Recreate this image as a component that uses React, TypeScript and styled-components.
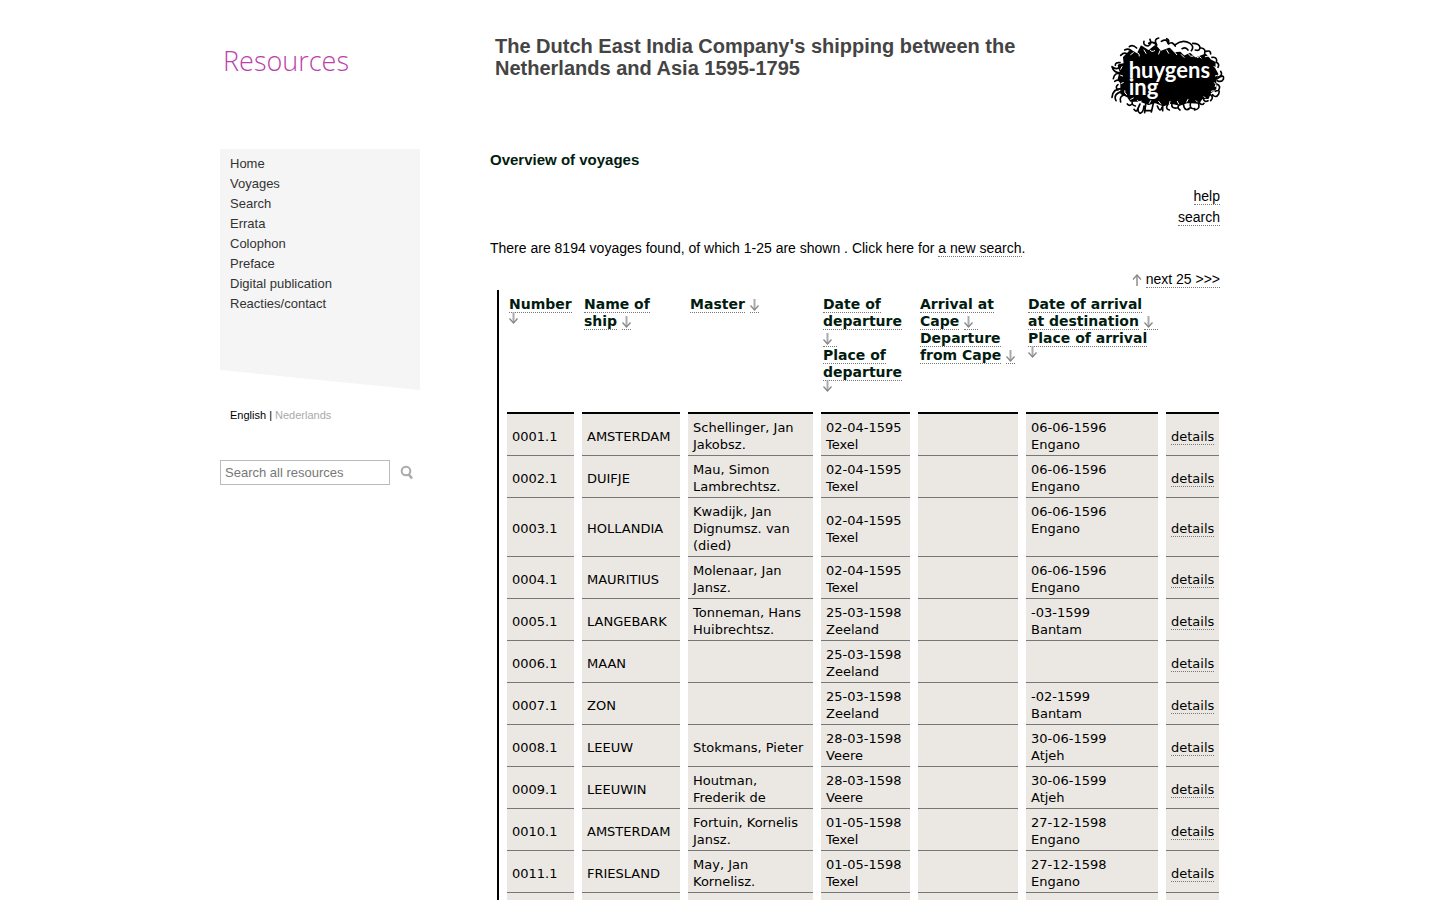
import React from 'react';
import styled, { createGlobalStyle } from 'styled-components';

const sans = '"Liberation Sans", Arial, sans-serif';
const wide = 'Verdana, "DejaVu Sans", sans-serif';

const GlobalStyle = createGlobalStyle`
  * { box-sizing: border-box; }
  body { margin: 0; background: #fff; color: #000; font: 14px/21px ${sans}; }
  a { color: inherit; text-decoration: none; }
  h1, h2, p, ul { margin: 0; padding: 0; }
`;

const Page = styled.div`
  max-width: 1000px;
  margin: 0 auto;
`;

const Clip = styled.div`
  height: 100vh;
  overflow: hidden;
`;

const Header = styled.header`
  display: grid;
  grid-template-columns: 200px 1fr auto;
  column-gap: 75px;
  height: 149px;
  padding-top: 35px;
  margin-right: -5px;
`;

const Brand = styled.a`
  padding: 8px 0 0 3px;
  font: 300 27px/36px "Open Sans", sans-serif;
  color: #bd3fab;
`;

const Title = styled.h1`
  max-width: 540px;
  font-size: 20px;
  line-height: 22px;
  color: #444;
`;

const Columns = styled.div`
  display: grid;
  grid-template-columns: 200px 1fr;
  column-gap: 70px;
`;

const Nav = styled.nav`
  height: 241px;
  padding: 5px 10px;
  background: #f5f5f5;
  clip-path: polygon(0 0, 100% 0, 100% 100%, 0 221px);
`;

const NavList = styled.ul`
  list-style: none;
  font-size: 13px;
  line-height: 20px;
  color: #333;
`;

const Languages = styled.div`
  padding: 15px 10px 0;
  font-size: 11px;
  line-height: 20px;
`;

const OtherLanguage = styled.a`
  color: #aaa;
`;

const SearchForm = styled.form`
  display: flex;
  align-items: center;
  gap: 10px;
  margin-top: 35px;
`;

const SearchInput = styled.input`
  width: 170px;
  height: 25px;
  padding: 0 4px;
  border: 1px solid #bbb;
  border-radius: 0;
  font: 13px ${sans};
  color: #777;
  &::placeholder { color: #777; opacity: 1; }
`;

const SearchButton = styled.button`
  display: flex;
  padding: 0;
  border: 0;
  background: none;
`;

const Heading = styled.h2`
  font-size: 15px;
  line-height: 21px;
  color: #021c10;
`;

const SideLinks = styled.div`
  display: flex;
  flex-direction: column;
  align-items: flex-end;
  margin-top: 16px;
`;

const LinkLine = styled.div`
  line-height: 21px;
`;

const Summary = styled.p`
  margin-top: 10px;
`;

const Pager = styled.div`
  display: flex;
  justify-content: flex-end;
  align-items: center;
  gap: 4px;
  margin-top: 10px;
`;

const DottedLink = styled.a`
  border-bottom: 1px dotted #777;
`;

const TableFrame = styled.div`
  margin: 0 -7px 0 7px;
  border-left: 2px solid #000;
`;

const Table = styled.table`
  width: 100%;
  table-layout: fixed;
  border-collapse: separate;
  border-spacing: 8px 0;
  font: 13px/17px ${wide};
`;

const HeadCell = styled.th`
  height: 122px;
  padding: 6px 0 0 2px;
  vertical-align: top;
  text-align: left;
  font-size: 14px;
  white-space: nowrap;
  color: #021c10;
`;

const Row = styled.tr`
  height: 42px;
  &:first-child td { border-top: 2px solid #000; }
`;

const Cell = styled.td<{ $top?: boolean }>`
  padding: 5px 0 2px 5px;
  border-bottom: 1px solid #777;
  background: #ebe8e3;
  vertical-align: ${(p) => (p.$top ? 'top' : 'middle')};
  white-space: pre-line;
`;

const InlineArrow = styled.svg`
  display: inline-block;
  vertical-align: -2px;
`;

const BelowArrow = styled.svg`
  display: block;
  margin-top: -1px;
  background: #fff;
`;

const ArrowShape = () => (
  <>
    <path d="M4.5 0V11" stroke="#aaa" strokeWidth="2" />
    <path d="M0.5 6.5L4.5 11L8.5 6.5" fill="none" stroke="#888" strokeWidth="1.3" />
  </>
);

const Sort = ({ trail = false }: { trail?: boolean }) => (
  <DottedLink href="#" aria-label="Sort">
    <InlineArrow width="9" height="12" viewBox="0 0 9 12"><ArrowShape /></InlineArrow>
    {trail && '\u00a0'}
  </DottedLink>
);

const SortBelow = () => (
  <a href="#" aria-label="Sort">
    <BelowArrow width="10" height="12" viewBox="0 0 10 12"><ArrowShape /></BelowArrow>
  </a>
);

const L = ({ children }: { children: React.ReactNode }) => <DottedLink href="#">{children}</DottedLink>;

const HuygensLogo = () => (
  <svg width="115" height="82" viewBox="30 15 345 246" role="img" aria-label="Huygens ING">
    <path stroke="#000" strokeWidth="6" strokeLinejoin="round" d="M72 82L92 62L112 74L124 50L146 64L166 48L182 66L208 56L222 70L240 68L252 80L270 72L286 86L316 74L330 90L344 98L343 116L352 132L346 154L346 176L330 188L324 204L306 204L296 218L262 216L240 224L214 218L190 226L166 216L146 222L120 212L92 212L84 200L64 190L64 160L56 146L62 126L56 106L74 102Z" />
    <g fill="none" stroke="#000" strokeLinecap="round" strokeWidth="5">
      <path d="M62 76q12-12 22-2M74 60q14-8 24 8M88 50q10-8 22 4M132 34q-4 12 12 14M150 28q6 14-6 20M146 40q16-8 24 6M176 24q-16 4-6 20M184 34q16-10 20 6M200 26q10 4 4 14M206 42q10-10 20 6M226 44q22-18 44-4q14 10 4 22M246 56q12-6 18 4M278 40q20 0 22 12q0 12-14 8M304 54q14 2 10 16M318 64q14-4 14 8M336 82q14-2 14 10M348 96q12 6 6 16" />
      <path d="M36 110q14 12 26 0M36 110q6 20 26 18M60 98q-14-2-14 8M40 146q4-20 20-14M44 154q12-8 20 2M54 164q-10 8 0 16M36 202q2-28 34-26M48 212q-10-20 18-28M62 216q-6-18 14-22M82 222q6 8 14 0M98 212q-6 12 8 16" />
      <path d="M362 124q8 12-8 18M352 146q22-16 18 2q-6 10-18 4M350 162q14 6 6 18M346 184q16-8 10 8q-8 14-18 2M328 192q16 8 4 20M310 206q4 12 14 6M298 218q8 10 14 2M102 238q8 12 12-4M120 222q-12 22 0 28q10-2 12-22M138 216l-4 32M134 242h18M160 220l-6 26M172 228q8 22 14 4M188 228v14M204 222q-10 14 4 18M216 220q-4 16 14 14M240 222q-12 10 0 18M250 222q4 26 20 12M272 216q-6 22 12 20M294 218q10 18-10 22" />
    </g>
    <g fill="none" stroke="#fff" strokeLinecap="round" strokeWidth="3">
      <path d="M92 74l8-6M112 68q8 2 6 10M132 60l6 10M150 60q4 8 14 2M180 62l-4 10M200 60l6 10M224 66l6 8M244 74l8 8M266 72q4 10 14 6M292 82q8-6 12 2M316 80l10-2M342 110l8 4M346 138l6-2M344 158q6 4 2 12M334 184l6-2M66 110l-4 8M62 136l6 2M64 160l6-2M74 182q-2 8 6 12M92 208l8-4M112 212q4 6 12 2M148 220l4-8M182 222l-6-8M208 222l2-8M236 222l-4-8M260 216l4-8M288 212l4 4M312 200l4 4" />
    </g>
    <text x="86" y="143" fill="#fff" fontFamily="Lato, sans-serif" fontWeight="700" fontSize="66">huygens</text>
    <text x="86" y="196" fill="#fff" fontFamily="Lato, sans-serif" fontWeight="700" fontSize="66">ing</text>
  </svg>
);

const columns = [67, 98, 125, 89, 100, 132, 53];

const voyages = [
  ['0001.1', 'AMSTERDAM', 'Schellinger, Jan\nJakobsz.', '02-04-1595\nTexel', '06-06-1596\nEngano'],
  ['0002.1', 'DUIFJE', 'Mau, Simon\nLambrechtsz.', '02-04-1595\nTexel', '06-06-1596\nEngano'],
  ['0003.1', 'HOLLANDIA', 'Kwadijk, Jan\nDignumsz. van\n(died)', '02-04-1595\nTexel', '06-06-1596\nEngano'],
  ['0004.1', 'MAURITIUS', 'Molenaar, Jan\nJansz.', '02-04-1595\nTexel', '06-06-1596\nEngano'],
  ['0005.1', 'LANGEBARK', 'Tonneman, Hans\nHuibrechtsz.', '25-03-1598\nZeeland', '-03-1599\nBantam'],
  ['0006.1', 'MAAN', '', '25-03-1598\nZeeland', ''],
  ['0007.1', 'ZON', '', '25-03-1598\nZeeland', '-02-1599\nBantam'],
  ['0008.1', 'LEEUW', 'Stokmans, Pieter', '28-03-1598\nVeere', '30-06-1599\nAtjeh'],
  ['0009.1', 'LEEUWIN', 'Houtman,\nFrederik de', '28-03-1598\nVeere', '30-06-1599\nAtjeh'],
  ['0010.1', 'AMSTERDAM', 'Fortuin, Kornelis\nJansz.', '01-05-1598\nTexel', '27-12-1598\nEngano'],
  ['0011.1', 'FRIESLAND', 'May, Jan\nKornelisz.', '01-05-1598\nTexel', '27-12-1598\nEngano'],
  ['', '', '', '', ''],
];

const navItems = ['Home', 'Voyages', 'Search', 'Errata', 'Colophon', 'Preface', 'Digital publication', 'Reacties/contact'];

export default function App() {
  return (
    <Clip>
      <GlobalStyle />
      <Page>
        <Header>
          <Brand href="#">Resources</Brand>
          <Title>The Dutch East India Company's shipping between the Netherlands and Asia 1595-1795</Title>
          <HuygensLogo />
        </Header>
        <Columns>
          <aside>
            <Nav>
              <NavList>
                {navItems.map((item) => <li key={item}><a href="#">{item}</a></li>)}
              </NavList>
            </Nav>
            <Languages>
              <a href="#">English</a> | <OtherLanguage href="#">Nederlands</OtherLanguage>
            </Languages>
            <SearchForm>
              <SearchInput type="text" aria-label="Search all resources" placeholder="Search all resources" />
              <SearchButton type="button" aria-label="Search">
                <svg width="14" height="15" viewBox="0 0 14 15" fill="none" stroke="#aaa">
                  <circle cx="6" cy="6" r="4.3" strokeWidth="2" />
                  <path d="M8.8 9.5L12 13.5" strokeWidth="2.6" />
                </svg>
              </SearchButton>
            </SearchForm>
          </aside>
          <main>
            <Heading>Overview of voyages</Heading>
            <SideLinks>
              <LinkLine><L>help</L></LinkLine>
              <LinkLine><L>search</L></LinkLine>
            </SideLinks>
            <Summary>
              There are 8194 voyages found, of which 1-25 are shown . Click here for <L>a new search</L>.
            </Summary>
            <Pager>
              <svg width="10" height="12" viewBox="0 0 10 12">
                <g transform="rotate(180 4.75 6)"><ArrowShape /></g>
              </svg>
              <span><L>next 25 &gt;&gt;&gt;</L></span>
            </Pager>
            <TableFrame>
              <Table>
                <colgroup>
                  {columns.map((w, i) => <col key={i} style={{ width: w }} />)}
                </colgroup>
                <thead>
                  <tr>
                    <HeadCell><L>Number</L><SortBelow /></HeadCell>
                    <HeadCell><L>Name of<br />ship</L> <Sort /></HeadCell>
                    <HeadCell><L>Master</L> <Sort /></HeadCell>
                    <HeadCell>
                      <L>Date of<br />departure</L><br /><Sort trail /><br />
                      <L>Place of<br />departure</L><SortBelow />
                    </HeadCell>
                    <HeadCell>
                      <L>Arrival at<br />Cape</L> <Sort trail /><br />
                      <L>Departure<br />from Cape</L> <Sort />
                    </HeadCell>
                    <HeadCell>
                      <L>Date of arrival<br />at destination</L> <Sort trail /><br />
                      <L>Place of arrival</L><SortBelow />
                    </HeadCell>
                    <HeadCell />
                  </tr>
                </thead>
                <tbody>
                  {voyages.map(([number, ship, master, departure, arrival], i) => (
                    <Row key={i}>
                      <Cell>{number}</Cell>
                      <Cell>{ship}</Cell>
                      <Cell>{master}</Cell>
                      <Cell>{departure}</Cell>
                      <Cell />
                      <Cell $top>{arrival}</Cell>
                      <Cell>{number && <L>details</L>}</Cell>
                    </Row>
                  ))}
                </tbody>
              </Table>
            </TableFrame>
          </main>
        </Columns>
      </Page>
    </Clip>
  );
}
